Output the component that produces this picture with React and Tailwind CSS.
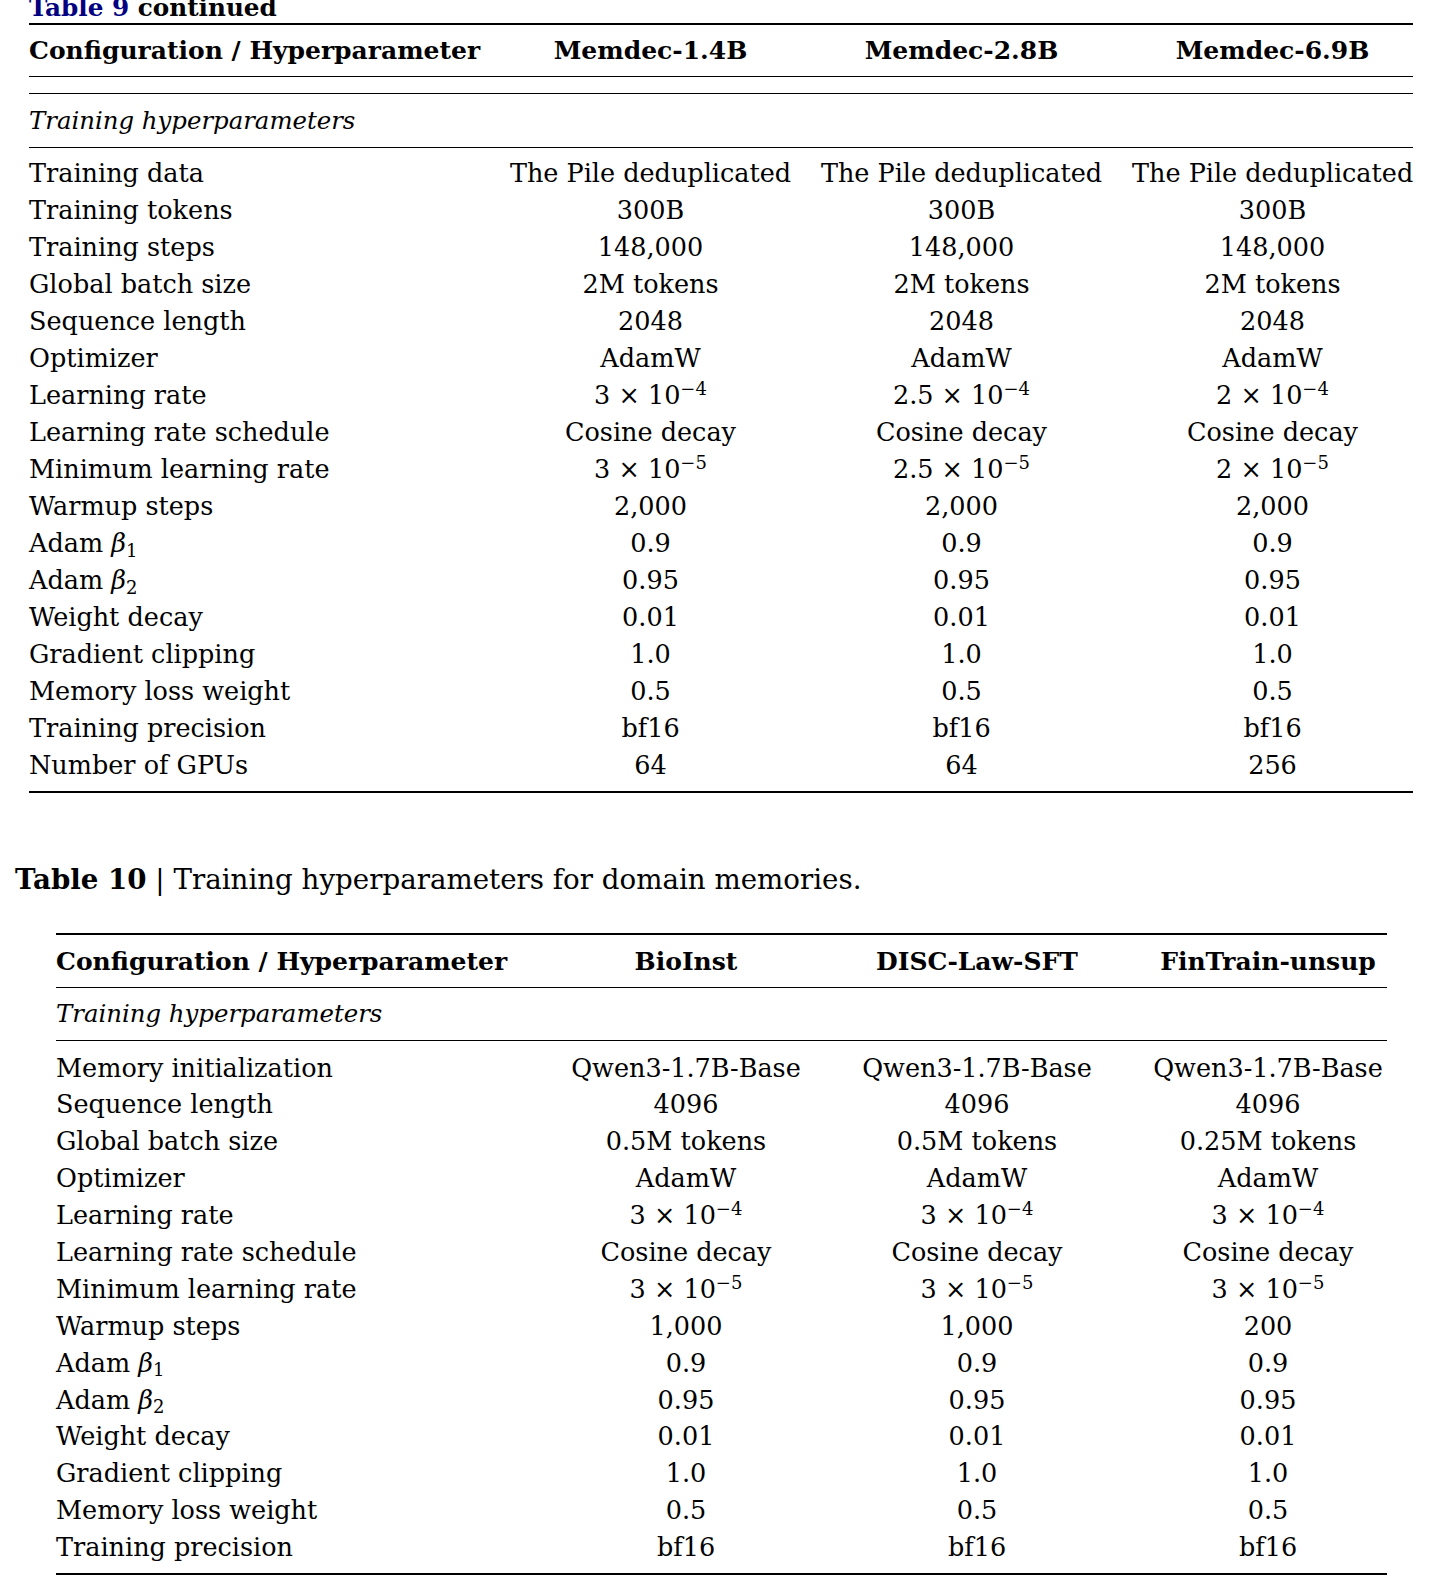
import React from "react";

const F = { fontFamily: '"DejaVu Serif", "Liberation Serif", serif' };

function Sci({ m, e }) {
  return (
    <span>
      {m} × 10<sup className="text-[18px]">−{e}</sup>
    </span>
  );
}

function Beta({ n }) {
  return (
    <span>
      Adam <i>β</i>
      <sub className="text-[18px]">{n}</sub>
    </span>
  );
}

const t9 = [
  ["Training data", "The Pile deduplicated", "The Pile deduplicated", "The Pile deduplicated"],
  ["Training tokens", "300B", "300B", "300B"],
  ["Training steps", "148,000", "148,000", "148,000"],
  ["Global batch size", "2M tokens", "2M tokens", "2M tokens"],
  ["Sequence length", "2048", "2048", "2048"],
  ["Optimizer", "AdamW", "AdamW", "AdamW"],
  ["Learning rate", <Sci m="3" e="4" />, <Sci m="2.5" e="4" />, <Sci m="2" e="4" />],
  ["Learning rate schedule", "Cosine decay", "Cosine decay", "Cosine decay"],
  ["Minimum learning rate", <Sci m="3" e="5" />, <Sci m="2.5" e="5" />, <Sci m="2" e="5" />],
  ["Warmup steps", "2,000", "2,000", "2,000"],
  [<Beta n="1" />, "0.9", "0.9", "0.9"],
  [<Beta n="2" />, "0.95", "0.95", "0.95"],
  ["Weight decay", "0.01", "0.01", "0.01"],
  ["Gradient clipping", "1.0", "1.0", "1.0"],
  ["Memory loss weight", "0.5", "0.5", "0.5"],
  ["Training precision", "bf16", "bf16", "bf16"],
  ["Number of GPUs", "64", "64", "256"],
];

const t10 = [
  ["Memory initialization", "Qwen3-1.7B-Base", "Qwen3-1.7B-Base", "Qwen3-1.7B-Base"],
  ["Sequence length", "4096", "4096", "4096"],
  ["Global batch size", "0.5M tokens", "0.5M tokens", "0.25M tokens"],
  ["Optimizer", "AdamW", "AdamW", "AdamW"],
  ["Learning rate", <Sci m="3" e="4" />, <Sci m="3" e="4" />, <Sci m="3" e="4" />],
  ["Learning rate schedule", "Cosine decay", "Cosine decay", "Cosine decay"],
  ["Minimum learning rate", <Sci m="3" e="5" />, <Sci m="3" e="5" />, <Sci m="3" e="5" />],
  ["Warmup steps", "1,000", "1,000", "200"],
  [<Beta n="1" />, "0.9", "0.9", "0.9"],
  [<Beta n="2" />, "0.95", "0.95", "0.95"],
  ["Weight decay", "0.01", "0.01", "0.01"],
  ["Gradient clipping", "1.0", "1.0", "1.0"],
  ["Memory loss weight", "0.5", "0.5", "0.5"],
  ["Training precision", "bf16", "bf16", "bf16"],
];

export default function App() {
  return (
    <div className="w-[1435px] h-[1596px] overflow-hidden bg-white text-black text-[25.5px]" style={F}>
      {/* Table 9 */}
      <div className="ml-[29px] w-[1384px]">
        <div className="-mt-[12.5px] h-[35px] pt-[1px] leading-[37px] font-bold whitespace-nowrap text-[24.7px]">
          <span className="text-[#000080]">Table 9</span> continued
        </div>
        <div className="h-[2px] bg-black" />
        <div className="h-[51px] pt-[2px] grid grid-cols-[466px_311px_311px_296px] items-center font-bold whitespace-nowrap text-[25px]">
          <div>Configuration / Hyperparameter</div>
          <div className="text-center">Memdec-1.4B</div>
          <div className="text-center">Memdec-2.8B</div>
          <div className="text-center pl-[15px]">Memdec-6.9B</div>
        </div>
        <div className="h-px bg-black" />
        <div className="h-[16px]" />
        <div className="h-px bg-black" />
        <div className="h-[53px] pt-[2px] flex items-center italic text-[24.4px]">Training hyperparameters</div>
        <div className="h-px bg-black" />
        <div className="h-[6.5px]" />
        {t9.map((r, i) => (
          <div key={i} className="h-[37px] pt-[1px] leading-[37px] grid grid-cols-[466px_311px_311px_296px] whitespace-nowrap">
            <div>{r[0]}</div>
            <div className="text-center">{r[1]}</div>
            <div className="text-center">{r[2]}</div>
            <div className="text-center pl-[15px]">{r[3]}</div>
          </div>
        ))}
        <div className="h-[7.5px]" />
        <div className="h-[2px] bg-black" />
      </div>

      {/* Table 10 caption */}
      <div className="mt-[67.5px] ml-[15px] h-[37px] pt-[1px] leading-[37px] whitespace-nowrap text-[27.7px]">
        <span className="font-bold">Table 10</span> | Training hyperparameters for domain memories.
      </div>

      {/* Table 10 */}
      <div className="mt-[35.5px] ml-[56px] w-[1331px]">
        <div className="h-[2px] bg-black" />
        <div className="h-[52px] pt-[2px] grid grid-cols-[484.5px_291px_291px_264.5px] items-center font-bold whitespace-nowrap text-[25px]">
          <div>Configuration / Hyperparameter</div>
          <div className="text-center">BioInst</div>
          <div className="text-center">DISC-Law-SFT</div>
          <div className="text-center pl-[26.5px]">FinTrain-unsup</div>
        </div>
        <div className="h-px bg-black" />
        <div className="h-[52px] pt-[2px] flex items-center italic text-[24.4px]">Training hyperparameters</div>
        <div className="h-px bg-black" />
        <div className="h-[8px]" />
        {t10.map((r, i) => (
          <div key={i} className="h-[36.9px] pt-[1px] leading-[37px] grid grid-cols-[484.5px_291px_291px_264.5px] whitespace-nowrap">
            <div>{r[0]}</div>
            <div className="text-center">{r[1]}</div>
            <div className="text-center">{r[2]}</div>
            <div className="text-center pl-[26.5px]">{r[3]}</div>
          </div>
        ))}
        <div className="h-[8.4px]" />
        <div className="h-[2px] bg-black" />
      </div>
    </div>
  );
}
